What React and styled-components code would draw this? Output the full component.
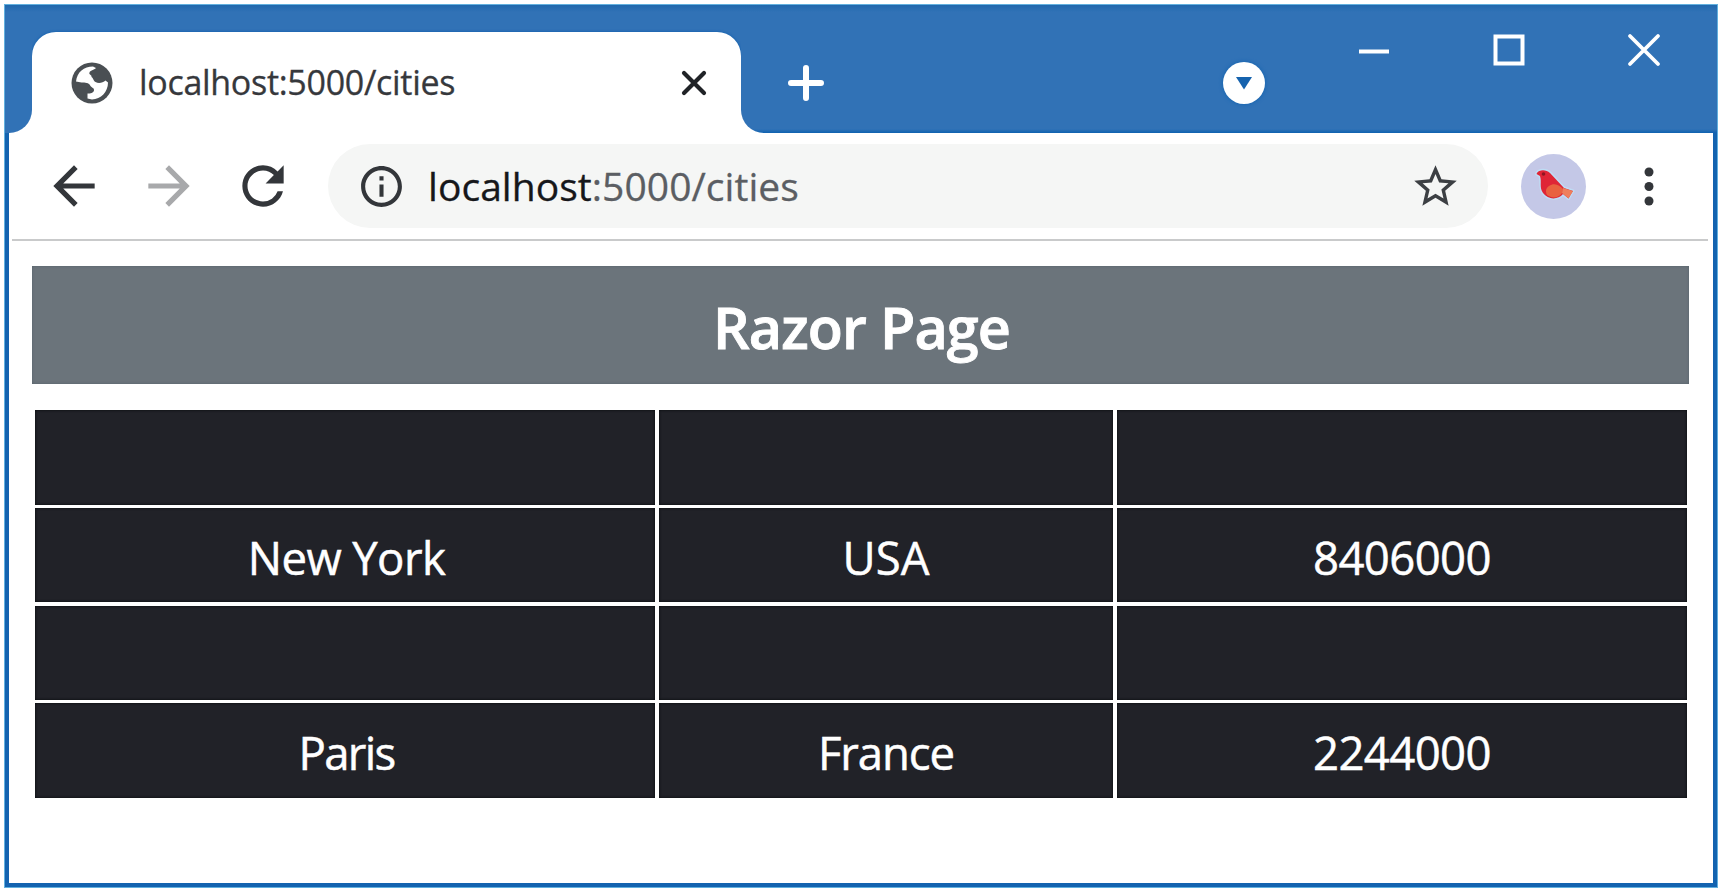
import React from "react";
import styled, { createGlobalStyle } from "styled-components";
import {
  MdArrowBack,
  MdArrowForward,
  MdRefresh,
  MdInfoOutline,
  MdStarBorder,
} from "react-icons/md";

const GlobalStyle = createGlobalStyle`
  * { box-sizing: border-box; }
  body { margin: 0; background: #fff; }
`;

const Page = styled.div`
  width: 1725px;
  height: 895px;
  padding: 4px 7px 7px 4px;
  background: #fff;
  overflow: hidden;
  font-family: "Open Sans", "Noto Sans", sans-serif;
  svg { display: block; flex: none; }
`;

const Window = styled.div`
  width: 1714px;
  height: 884px;
  display: flex;
  flex-direction: column;
  border: 1px solid #62b0de;
`;

const TitleBar = styled.div`
  height: 128px;
  flex: none;
  display: flex;
  background: #fff;
`;

const barFill = "linear-gradient(#2068ad, #3172b6 7px)";

const LeftCap = styled.div`
  width: 27px;
  background: ${barFill};
  border-bottom-right-radius: 23px;
`;

const TabSlot = styled.div`
  width: 709px;
  padding-top: 27px;
  background: ${barFill};
`;

const Tab = styled.div`
  height: 101px;
  display: flex;
  align-items: center;
  padding: 0 34px 0 39px;
  background: #fff;
  border-radius: 24px 24px 0 0;
  box-shadow: 0 0 3px #0a5cad;
  clip-path: inset(-4px 0 0 0);
`;

const TabTitle = styled.span`
  flex: 1;
  margin: -2px 0 0 26px;
  font-size: 34px;
  line-height: 46px;
  letter-spacing: ${(p) => p.$track}px;
  white-space: nowrap;
  color: #36383c;
  -webkit-text-stroke: 0.3px #36383c;
`;

const Frame = styled.div`
  flex: 1;
  display: flex;
  align-items: flex-start;
  padding: 0 55px 0 46px;
  background: linear-gradient(transparent 124px, #0f62b0), ${barFill};
  border-bottom-left-radius: 23px;
`;

const NewTab = styled.div`
  margin-top: 59px;
`;

const TabSearch = styled.div`
  width: 42px;
  height: 42px;
  margin: 57px 0 0 auto;
  display: flex;
  align-items: center;
  justify-content: center;
  border-radius: 50%;
  background: #fff;
  box-shadow: 0 0 4px #0f62b0;
`;

const WindowControls = styled.div`
  display: flex;
  gap: 99px;
  margin: 27px 0 0 91px;
`;

const Body = styled.div`
  flex: 1;
  display: flex;
  flex-direction: column;
  border: solid #1363b0;
  border-width: 0 4px 4px;
`;

const Toolbar = styled.div`
  height: 108px;
  flex: none;
  display: flex;
  align-items: center;
  margin: 0 5px 0 3px;
  padding: 0 54px 0 31px;
  border-bottom: 2px solid #c9cacb;
`;

const NavButtons = styled.div`
  display: flex;
  gap: 32.5px;
`;

const AddressBar = styled.div`
  width: 1160px;
  height: 84px;
  margin-left: 34px;
  padding: 0 27px 0 29px;
  display: flex;
  align-items: center;
  border-radius: 42px;
  background: #f5f6f5;
`;

const Address = styled.span`
  flex: 1;
  margin: -1px 0 0 22px;
  font-size: 39px;
  line-height: 53px;
  letter-spacing: ${(p) => p.$track}px;
  white-space: nowrap;
  color: #5b5e63;
  -webkit-text-stroke: 0.3px;
`;

const Host = styled.span`
  color: #16171a;
`;

const Avatar = styled.div`
  width: 65px;
  height: 65px;
  margin-left: 33px;
  display: flex;
  align-items: center;
  justify-content: center;
  border-radius: 50%;
  background: #c4c8e7;
`;

const Menu = styled.div`
  margin-left: 58px;
`;

const Content = styled.div`
  padding: 25px 24px 0 23px;
`;

const Heading = styled.h1`
  height: 118px;
  margin: 0 0 26px;
  padding: 3px 0 0 2px;
  display: flex;
  align-items: center;
  justify-content: center;
  background: #6b747b;
  box-shadow: inset 0 0 3px #56626b;
  color: #fff;
  font-size: 57.5px;
  font-weight: 600;
  letter-spacing: ${(p) => p.$track}px;
  -webkit-text-stroke: 0.9px #fff;
`;

const Table = styled.div`
  display: grid;
  grid-template-columns: 620px 454px 570px;
  grid-template-rows: repeat(4, 94.6px);
  gap: 3.2px 4px;
  margin-left: 3px;
`;

const Cell = styled.div`
  display: flex;
  align-items: center;
  justify-content: center;
  padding: 3px 0 0 ${(p) => (p.$first ? 3 : 0)}px;
  background: #212228;
  box-shadow: inset 0 0 3px #04070a;
  color: #fff;
  font-size: 45.5px;
  letter-spacing: ${(p) => p.$track}px;
  -webkit-text-stroke: 0.5px #fff;
`;

const empty = { text: "", track: 0 };
const rows = [
  [empty, empty, empty],
  [
    { text: "New York", track: -0.6 },
    { text: "USA", track: 0 },
    { text: "8406000", track: -0.6 },
  ],
  [empty, empty, empty],
  [
    { text: "Paris", track: -1.7 },
    { text: "France", track: -1.1 },
    { text: "2244000", track: -0.6 },
  ],
];

const GlobeIcon = () => (
  <svg width="42" height="42" viewBox="0 0 42 42">
    <circle cx="21" cy="21" r="20.5" fill="#4a4f53" />
    <path
      d="M5 19.500C6 10 13 4.500 22 4.500L25 6C23 8 19 8.500 18.500 10.500C17.500 13 21 12.500 20.500 15C22.500 16 22 18.500 24.500 20C28 22 32 20.500 34.500 18.500L37 20.500C37 30 30 37 21 37.500L16.500 36.500L16.500 31.500C19.500 31.500 22.500 31 23 28.500C23.500 26 20.500 25.500 19.500 24C18 20.500 14 20.500 10.500 20.500Z"
      fill="#fff"
    />
  </svg>
);

const TabCloseIcon = () => (
  <svg width="26" height="26" viewBox="0 0 26 26">
    <path d="M3 3L23 23M23 3L3 23" stroke="#202327" strokeWidth="4.200" strokeLinecap="round" />
  </svg>
);

const PlusIcon = () => (
  <svg width="38" height="38" viewBox="0 0 38 38">
    <path d="M19 4V34M4 19H34" stroke="#fff" strokeWidth="6" strokeLinecap="round" />
  </svg>
);

const BirdIcon = () => (
  <svg width="65" height="65" viewBox="0 0 65 65">
    <path
      d="M16 19C18 15.500 25 15 29 19L43 34L52 37L50 40L47.500 44.500L42 40C37 46 27 46 22 39C18 33 21 28 19 22L15.500 20Z"
      fill="#df2536"
      stroke="#bfdcf4"
      strokeWidth="3"
      paintOrder="stroke"
      strokeLinejoin="round"
    />
    <path d="M28 32C34 28 39 32 42 35L41 39C38 44 31 45 26 41C24 37 25 34 28 32Z" fill="#e9613f" />
    <path d="M42 34L52 37L47.500 44.500L41 39Z" fill="#ee7f5c" />
    <circle cx="22.500" cy="20" r="1.800" fill="#8f1622" />
  </svg>
);

export default function App() {
  return (
    <>
      <GlobalStyle />
      <Page>
        <Window>
          <TitleBar>
            <LeftCap />
            <TabSlot>
              <Tab>
                <GlobeIcon />
                <TabTitle $track={-0.3}>localhost:5000/cities</TabTitle>
                <TabCloseIcon />
              </Tab>
            </TabSlot>
            <Frame>
              <NewTab>
                <PlusIcon />
              </NewTab>
              <TabSearch>
                <svg width="18" height="14" viewBox="0 0 18 14">
                  <path d="M1 1H17L9 13.500Z" fill="#1663ae" />
                </svg>
              </TabSearch>
              <WindowControls>
                <svg width="36" height="38" viewBox="0 0 36 38">
                  <path d="M3 19.500H33" stroke="#fff" strokeWidth="4" />
                </svg>
                <svg width="36" height="38" viewBox="0 0 36 38">
                  <rect x="4.500" y="4.500" width="27" height="27" fill="none" stroke="#fff" strokeWidth="4" />
                </svg>
                <svg width="36" height="38" viewBox="0 0 36 38">
                  <path d="M4 4L32 32M32 4L4 32" stroke="#fff" strokeWidth="3.800" strokeLinecap="round" />
                </svg>
              </WindowControls>
            </Frame>
          </TitleBar>
          <Body>
            <Toolbar>
              <NavButtons>
                <MdArrowBack size={62} color="#33363a" />
                <MdArrowForward size={62} color="#a8a9ab" />
                <MdRefresh size={62} color="#33363a" />
              </NavButtons>
              <AddressBar>
                <MdInfoOutline size={49} color="#33363a" />
                <Address $track={0.05}>
                  <Host>localhost</Host>:5000/cities
                </Address>
                <MdStarBorder size={51} color="#3c3f43" />
              </AddressBar>
              <Avatar>
                <BirdIcon />
              </Avatar>
              <Menu>
                <svg width="10" height="42" viewBox="0 0 10 42">
                  <g fill="#33363a">
                    <circle cx="5" cy="7" r="4.500" />
                    <circle cx="5" cy="21.500" r="4.500" />
                    <circle cx="5" cy="36" r="4.500" />
                  </g>
                </svg>
              </Menu>
            </Toolbar>
            <Content>
              <Heading $track={-0.9}>Razor Page</Heading>
              <Table>
                {rows.map((row, r) =>
                  row.map((cell, c) => (
                    <Cell key={`${r}-${c}`} $track={cell.track} $first={c === 0}>
                      {cell.text}
                    </Cell>
                  ))
                )}
              </Table>
            </Content>
          </Body>
        </Window>
      </Page>
    </>
  );
}
